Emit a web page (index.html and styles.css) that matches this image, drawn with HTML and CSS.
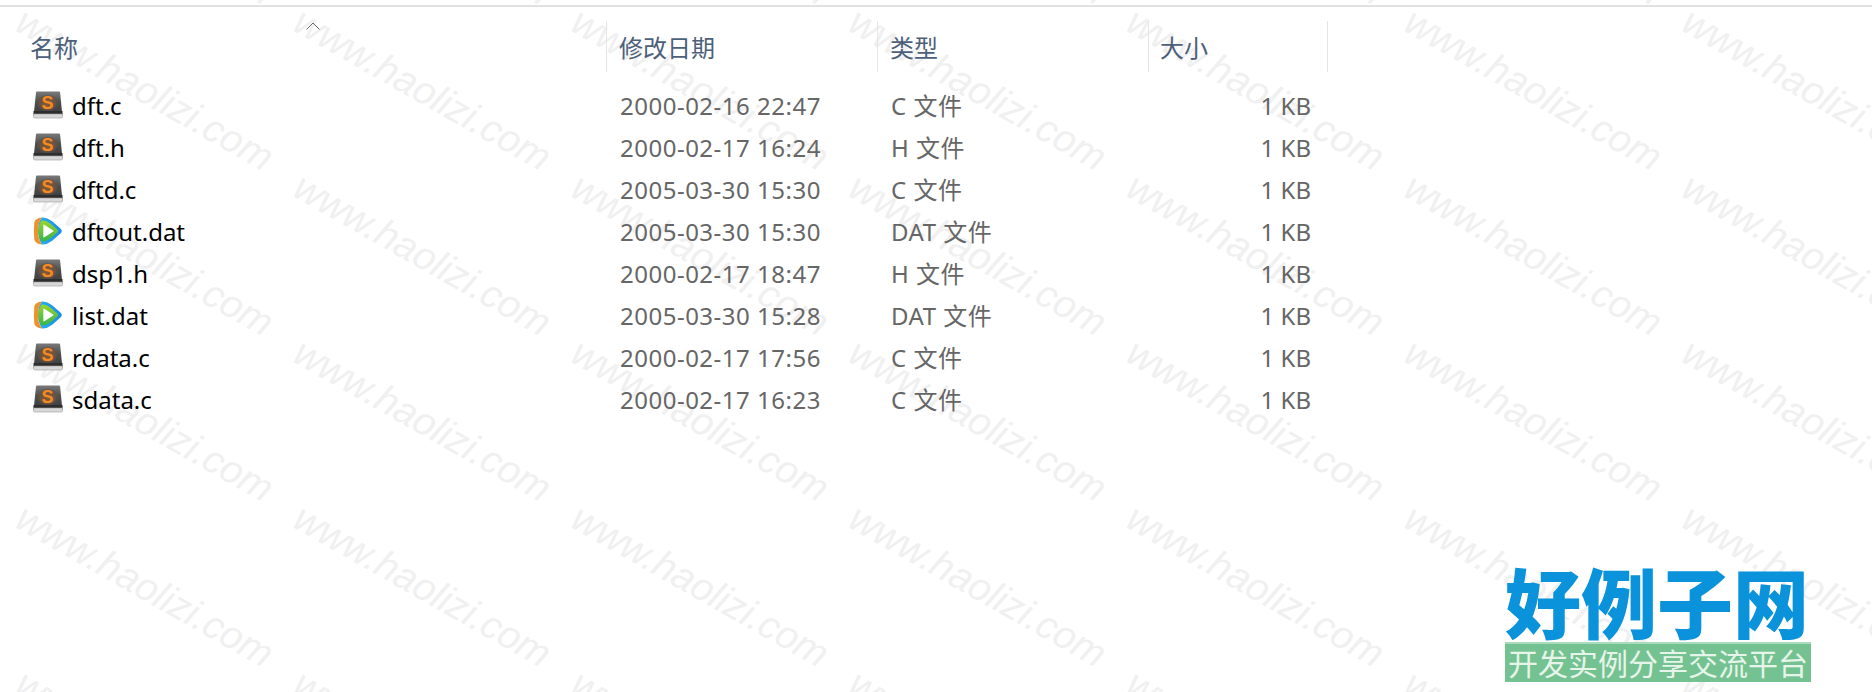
FILE: index.html
```html
<!DOCTYPE html>
<html lang="zh-CN">
<head>
    <meta charset="UTF-8">
    <title>文件列表</title>
    <link rel="stylesheet" href="styles.css">
</head>
<body>

    <svg class="icon-defs" width="0" height="0">
        <defs>
            <linearGradient id="slab" x1="0" y1="0" x2="0" y2="1">
                <stop offset="0" stop-color="#7a7a7a"/>
                <stop offset="0.4" stop-color="#505050"/>
                <stop offset="1" stop-color="#383838"/>
            </linearGradient>
            <radialGradient id="spot">
                <stop offset="0" stop-color="#8a5a2c"/>
                <stop offset="0.7" stop-color="#6a5240"/>
                <stop offset="1" stop-color="#5a5048" stop-opacity="0"/>
            </radialGradient>
            <linearGradient id="sheen" x1="0" y1="0" x2="1" y2="0">
                <stop offset="0" stop-color="#25b3f2"/>
                <stop offset="1" stop-color="#1e88e8"/>
            </linearGradient>
            <linearGradient id="leaf" x1="0" y1="0" x2="0" y2="1">
                <stop offset="0" stop-color="#9ad52c"/>
                <stop offset="1" stop-color="#35b54a"/>
            </linearGradient>
            <symbol id="icon-sublime" viewBox="0 0 30 28">
                <path d="M3 1.5Q3 .5 4 .5H26Q27 .5 27.100 1.500L29.500 25.500H.5Z" fill="url(#slab)"/>
                <ellipse cx="14.500" cy="12" rx="11" ry="9" fill="url(#spot)"/>
                <text x="14.500" y="17.500" class="icon-s">S</text>
                <rect x=".5" y="20" width="29" height="3" fill="#2e2e2e"/>
                <path d="M.5 23H29.500V25.500Q29.500 27 28 27H2Q.5 27 .5 25.500Z" fill="#d8d8d8" stroke="#a0a0a0" stroke-width=".6"/>
            </symbol>
            <symbol id="icon-player" viewBox="0 0 28 27">
                <path d="M8 .5Q13 0 18 4L26 11Q28.500 13.500 26 16L18 23Q13 27 8 26.500Q4 20 4.500 13Q4 6 8 .5Z" fill="url(#sheen)"/>
                <path d="M8 .5Q2 1 .8 5Q0 13.500 .8 22Q2 26 8 26.500Q4 20 4.500 13.500Q4 6 8 .5Z" fill="#f2912c"/>
                <path d="M7.500 3.500Q12 3 16.500 6.500L23 12Q24.500 13.500 23 15L16.500 20.500Q12 24 7.500 23.500Q4.500 18 4.500 13.500Q4.500 9 7.500 3.500Z" fill="url(#leaf)"/>
                <path d="M9.500 8Q9.500 7 10.500 7.500L19 13Q20 13.500 19 14L10.500 19.500Q9.500 20 9.500 19Z" fill="#fff"/>
            </symbol>
        </defs>
    </svg>

    <!-- 水印 -->
    <svg class="watermark" width="1872" height="692">
        <defs>
            <text id="wm-text" class="wm-text" transform="rotate(29.6)">www.haolizi.com</text>
            <g id="wm-row">
                <use href="#wm-text" x="0"/>
                <use href="#wm-text" x="277.700"/>
                <use href="#wm-text" x="555.400"/>
                <use href="#wm-text" x="833.100"/>
                <use href="#wm-text" x="1110.800"/>
                <use href="#wm-text" x="1388.500"/>
                <use href="#wm-text" x="1666.200"/>
            </g>
        </defs>
        <use href="#wm-row" transform="translate(13 -136)"/>
        <use href="#wm-row" transform="translate(13 29.500)"/>
        <use href="#wm-row" transform="translate(13 195)"/>
        <use href="#wm-row" transform="translate(13 360.500)"/>
        <use href="#wm-row" transform="translate(13 526)"/>
        <use href="#wm-row" transform="translate(13 691.500)"/>
    </svg>

    <div class="explorer">
        <div class="list-header">
            <div class="col-head col-name">名称
                <svg class="sort-caret" width="14" height="8" viewBox="0 0 14 8"><path d="M.5 7.500L7 1L13.500 7.500" fill="none" stroke="#666" stroke-width="1"/></svg>
            </div>
            <div class="col-head">修改日期</div>
            <div class="col-head">类型</div>
            <div class="col-head col-size">大小</div>
        </div>

        <div class="file-row">
            <div class="file-name"><svg class="file-icon"><use href="#icon-sublime"/></svg>dft.c</div>
            <div class="file-date">2000-02-16 22:47</div>
            <div class="file-type">C 文件</div>
            <div class="file-size">1 KB</div>
        </div>
        <div class="file-row">
            <div class="file-name"><svg class="file-icon"><use href="#icon-sublime"/></svg>dft.h</div>
            <div class="file-date">2000-02-17 16:24</div>
            <div class="file-type">H 文件</div>
            <div class="file-size">1 KB</div>
        </div>
        <div class="file-row">
            <div class="file-name"><svg class="file-icon"><use href="#icon-sublime"/></svg>dftd.c</div>
            <div class="file-date">2005-03-30 15:30</div>
            <div class="file-type">C 文件</div>
            <div class="file-size">1 KB</div>
        </div>
        <div class="file-row">
            <div class="file-name"><svg class="file-icon"><use href="#icon-player"/></svg>dftout.dat</div>
            <div class="file-date">2005-03-30 15:30</div>
            <div class="file-type">DAT 文件</div>
            <div class="file-size">1 KB</div>
        </div>
        <div class="file-row">
            <div class="file-name"><svg class="file-icon"><use href="#icon-sublime"/></svg>dsp1.h</div>
            <div class="file-date">2000-02-17 18:47</div>
            <div class="file-type">H 文件</div>
            <div class="file-size">1 KB</div>
        </div>
        <div class="file-row">
            <div class="file-name"><svg class="file-icon"><use href="#icon-player"/></svg>list.dat</div>
            <div class="file-date">2005-03-30 15:28</div>
            <div class="file-type">DAT 文件</div>
            <div class="file-size">1 KB</div>
        </div>
        <div class="file-row">
            <div class="file-name"><svg class="file-icon"><use href="#icon-sublime"/></svg>rdata.c</div>
            <div class="file-date">2000-02-17 17:56</div>
            <div class="file-type">C 文件</div>
            <div class="file-size">1 KB</div>
        </div>
        <div class="file-row">
            <div class="file-name"><svg class="file-icon"><use href="#icon-sublime"/></svg>sdata.c</div>
            <div class="file-date">2000-02-17 16:23</div>
            <div class="file-type">C 文件</div>
            <div class="file-size">1 KB</div>
        </div>
    </div>

    <div class="site-logo">
        <div class="logo-title">好例子网</div>
        <div class="logo-band">开发实例分享交流平台</div>
    </div>

</body>
</html>
```

FILE: styles.css
```css
html, body {
    margin: 0;
    height: 692px;
    overflow: hidden;
    background-color: #fff;
}

body {
    position: relative;
    font-family: "Noto Sans", "Noto Sans CJK SC", sans-serif;
    font-size: 24px;
}

.icon-defs {
    position: absolute;
}

.icon-s {
    font-family: "Liberation Sans", sans-serif;
    font-size: 18px;
    font-weight: bold;
    fill: #f58a24;
    text-anchor: middle;
}

.watermark {
    position: absolute;
    top: 0;
    left: 0;
}

.wm-text {
    font-family: "Liberation Sans", sans-serif;
    font-size: 39px;
    font-style: italic;
    fill: #f0f0f0;
}

.explorer {
    position: relative;
    padding-top: 5px;
}

.list-header,
.file-row {
    display: grid;
    grid-template-columns: 607px 271px 271px 179px;
}

.list-header {
    border-top: 2px solid #e1e1e1;
    padding-top: 14px;
    margin-bottom: 13px;
}

.col-head {
    position: relative;
    height: 51px;
    line-height: 53px;
    padding-left: 12px;
    border-right: 1px solid #e5e5e5;
    color: #4c607a;
}

.col-name {
    padding-left: 30px;
}

.col-size {
    padding-left: 11px;
}

.sort-caret {
    position: absolute;
    top: 1px;
    left: 306px;
}

.file-row {
    height: 42px;
    line-height: 42px;
    color: #666;
}

.file-name {
    display: flex;
    align-items: center;
    padding-left: 33px;
    color: #000;
}

.file-icon {
    width: 30px;
    height: 28px;
    margin-right: 9px;
    margin-bottom: 3px;
}

.file-date,
.file-type {
    padding-left: 13px;
    letter-spacing: 0.5px;
}

.file-size {
    padding-right: 17px;
    text-align: right;
}

.site-logo {
    position: absolute;
    top: 558px;
    left: 1505px;
    width: 306px;
}

.logo-title {
    height: 84px;
    line-height: 84px;
    font-family: "Noto Sans CJK SC", sans-serif;
    font-size: 76px;
    font-weight: 900;
    color: #0a92db;
    white-space: nowrap;
}

.logo-band {
    height: 38px;
    line-height: 36px;
    border-top: 2px solid #a8dcbc;
    background-color: #74c291;
    color: #e6f4ea;
    font-family: "Noto Sans CJK SC", sans-serif;
    font-size: 30px;
    text-align: center;
    white-space: nowrap;
}
```
